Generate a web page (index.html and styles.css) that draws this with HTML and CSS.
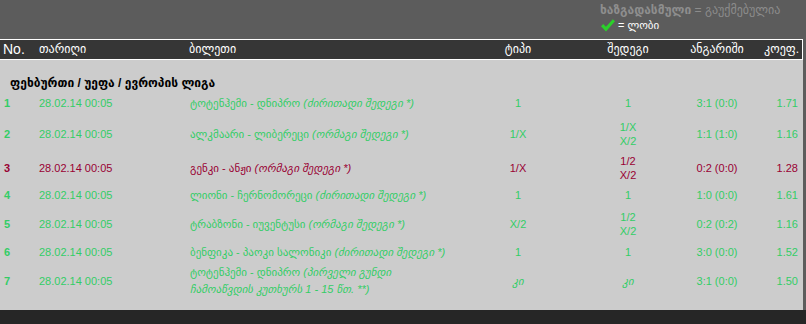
FILE: index.html
```html
<!DOCTYPE html>
<html lang="ka">
<head>
<meta charset="utf-8">
<title>ბილეთი</title>
<link rel="stylesheet" href="styles.css">
</head>
<body>
<div class="legend">
  <div class="legend-line"><span class="legend-key">ხაზგადასმული</span> = გაუქმებულია</div>
  <div class="legend-line legend-lobby">
    <svg class="check" width="14" height="13" viewBox="0 0 14 13"><path d="M0 7.2 L2.2 5 L5 7.8 L11.8 0.2 L14 2.2 L5 12.6 Z" fill="#2ad12a"/></svg>
    <span>= ლობი</span>
  </div>
</div>
<div class="board">
  <table class="tickets">
    <colgroup>
      <col class="c-no"><col class="c-date"><col class="c-event"><col class="c-type"><col class="c-res"><col class="c-score"><col class="c-coef">
    </colgroup>
    <thead>
      <tr>
        <th class="h-no">No.</th>
        <th class="left">თარიღი</th>
        <th class="left">ბილეთი</th>
        <th>ტიპი</th>
        <th>შედეგი</th>
        <th>ანგარიში</th>
        <th class="right last">კოეფ.</th>
      </tr>
    </thead>
    <tbody>
      <tr class="section"><td colspan="7">ფეხბურთი / უეფა / ევროპის ლიგა</td></tr>
      <tr class="win r1">
        <td class="num">1</td><td class="date">28.02.14 00:05</td>
        <td class="event">ტოტენჰემი - დნიპრო <i>(ძირითადი შედეგი *)</i></td>
        <td>1</td><td>1</td><td>3:1 (0:0)</td><td class="right">1.71</td>
      </tr>
      <tr class="win r2">
        <td class="num">2</td><td class="date">28.02.14 00:05</td>
        <td class="event">ალკმაარი - ლიბერეცი <i>(ორმაგი შედეგი *)</i></td>
        <td>1/X</td><td>1/X<br>X/2</td><td>1:1 (1:0)</td><td class="right">1.16</td>
      </tr>
      <tr class="lose r3">
        <td class="num">3</td><td class="date">28.02.14 00:05</td>
        <td class="event">გენკი - ანჟი <i>(ორმაგი შედეგი *)</i></td>
        <td>1/X</td><td>1/2<br>X/2</td><td>0:2 (0:0)</td><td class="right">1.28</td>
      </tr>
      <tr class="win r4">
        <td class="num">4</td><td class="date">28.02.14 00:05</td>
        <td class="event">ლიონი - ჩერნომორეცი <i>(ძირითადი შედეგი *)</i></td>
        <td>1</td><td>1</td><td>1:0 (0:0)</td><td class="right">1.61</td>
      </tr>
      <tr class="win r5">
        <td class="num">5</td><td class="date">28.02.14 00:05</td>
        <td class="event">ტრაბზონი - იუვენტუსი <i>(ორმაგი შედეგი *)</i></td>
        <td>X/2</td><td>1/2<br>X/2</td><td>0:2 (0:2)</td><td class="right">1.16</td>
      </tr>
      <tr class="win r6">
        <td class="num">6</td><td class="date">28.02.14 00:05</td>
        <td class="event">ბენფიკა - პაოკი სალონიკი <i>(ძირითადი შედეგი *)</i></td>
        <td>1</td><td>1</td><td>3:0 (0:0)</td><td class="right">1.52</td>
      </tr>
      <tr class="win r7">
        <td class="num">7</td><td class="date">28.02.14 00:05</td>
        <td class="event tall">ტოტენჰემი - დნიპრო <i>(პირველი გუნდი<br>ჩამოაწვდის კუთხურს 1 - 15 წთ. **)</i></td>
        <td><i>კი</i></td><td><i>კი</i></td><td>3:1 (0:0)</td><td class="right">1.50</td>
      </tr>
    </tbody>
  </table>
</div>
<div class="footer"></div>
</body>
</html>
```
FILE: styles.css
```css
html, body {
  margin: 0;
  padding: 0;
}
body {
  background: #5c5c5c;
  font-family: "Liberation Sans", "DejaVu Sans", sans-serif;
  font-size: 11px;
  width: 806px;
  height: 324px;
  overflow: hidden;
}
.legend {
  height: 39px;
  box-sizing: border-box;
  padding: 3px 0 0 600px;
  color: #8c8c8c;
  line-height: 15px;
  font-size: 12px;
}
.legend-key {
  font-weight: bold;
  color: #8e8e8e;
}
.legend-lobby {
  display: flex;
  align-items: center;
  gap: 3px;
  color: #ffffff;
  font-size: 11px;
}
.check {
  display: block;
  margin-left: 1px;
}
.board {
  width: 803px;
  height: 271px;
  background: #cccccc;
}
.tickets {
  width: 803px;
  border-collapse: separate;
  border-spacing: 0;
  table-layout: fixed;
}
.c-no { width: 36px; }
.c-date { width: 150px; }
.c-event { width: 280px; }
.c-type { width: 104px; }
.c-res { width: 116px; }
.c-score { width: 62px; }
.c-coef { width: 55px; }

.tickets th {
  background: #363636;
  color: #ffffff;
  font-weight: normal;
  font-size: 12px;
  line-height: 19px;
  height: 19px;
  padding: 0;
  border-top: 1px solid #ffffff;
  border-bottom: 1px solid #ffffff;
  text-align: center;
  white-space: nowrap;
}
.tickets th.left { text-align: left; padding-left: 3px; }
.tickets th.right { text-align: right; padding-right: 3px; }
.tickets th.last { border-right: 1px solid #ffffff; }
.tickets th.h-no {
  text-align: left;
  padding-left: 3px;
  font-size: 14px;
}
.tickets td {
  padding: 0;
  text-align: center;
  vertical-align: middle;
  line-height: 14px;
  font-size: 11px;
  white-space: nowrap;
}
.tickets td.right { text-align: right; padding-right: 5px; }
.tickets td.num { text-align: left; padding-left: 4px; font-weight: bold; }
.tickets td.date { text-align: left; padding-left: 3px; }
.tickets td.event { text-align: left; padding-left: 4px; }
.tickets td.tall { line-height: 17px; }
.tickets i { font-style: italic; }

.section td {
  height: 31px;
  box-sizing: border-box;
  text-align: left;
  padding: 14px 0 0 10px;
  font-weight: bold;
  font-size: 12px;
  color: #000000;
}
.win td { color: #33cc66; }
.lose td { color: #990033; }
.r1 td, .r4 td, .r6 td { height: 24px; }
.r2 td { height: 37px; }
.r3 td { height: 31px; }
.r5 td { height: 33px; }
.r7 td { height: 34px; }

.footer {
  height: 14px;
  background: #262626;
}
```
